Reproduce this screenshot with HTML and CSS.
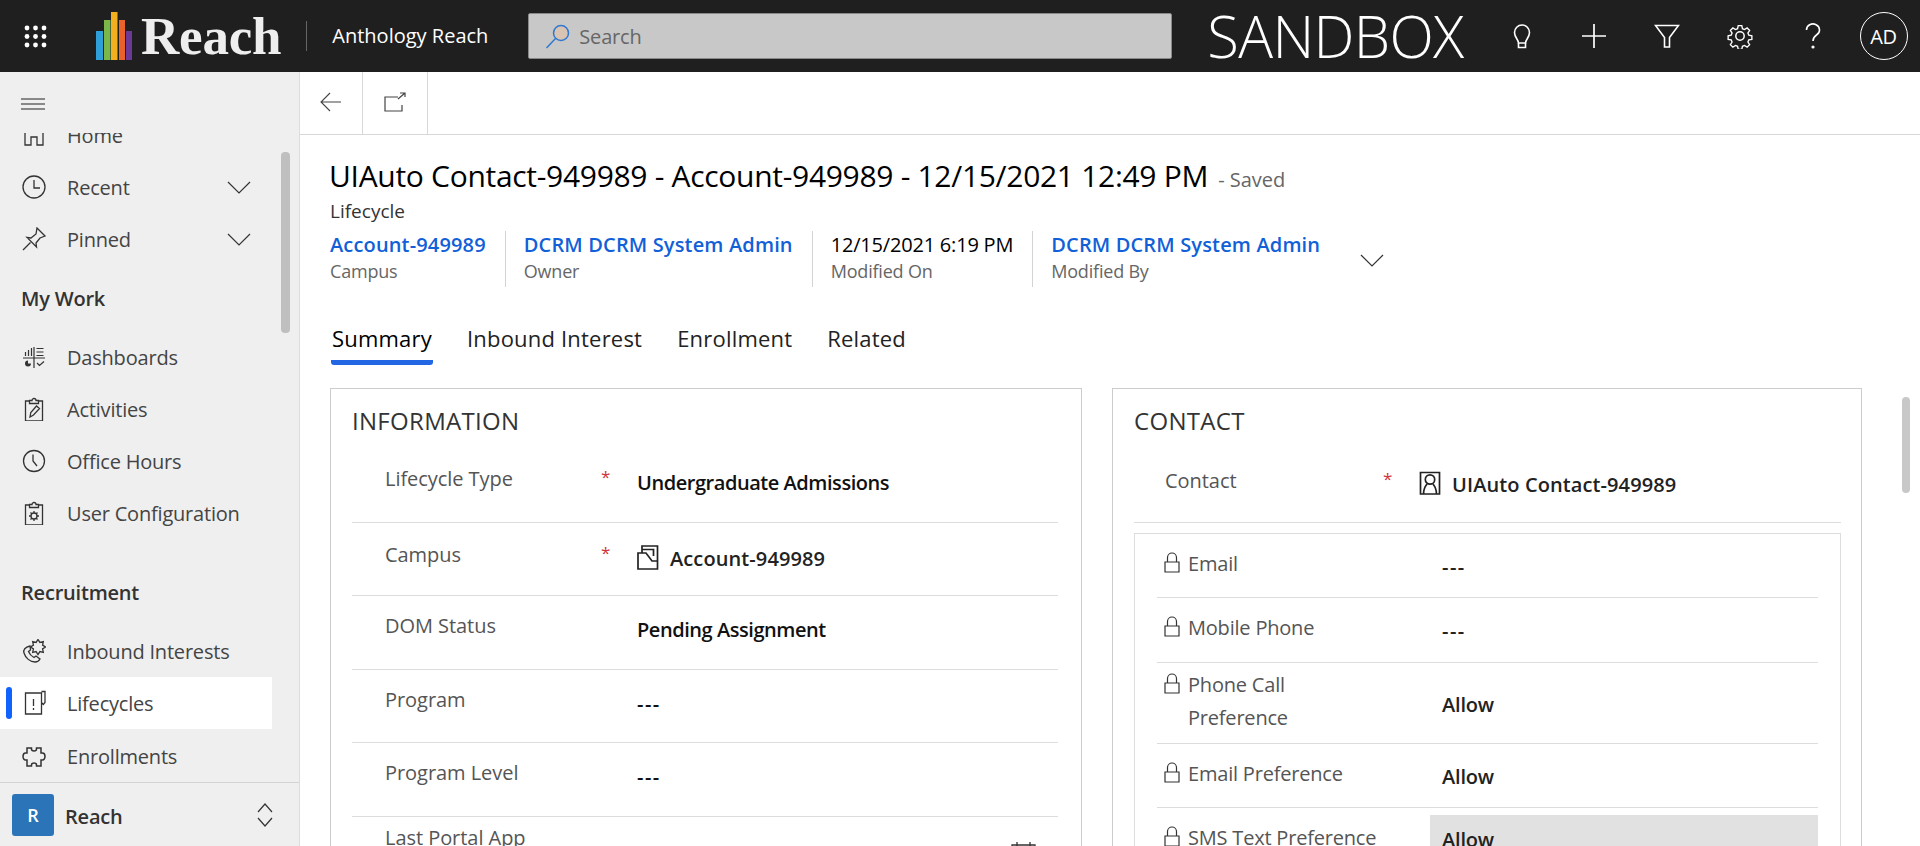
FILE: index.html
```html
<!DOCTYPE html>
<html lang="en">
<head>
    <meta charset="UTF-8">
    <meta name="viewport" content="width=device-width, initial-scale=1.0">
    <title>Anthology Reach - Lifecycle</title>
    <link rel="stylesheet" href="styles.css">
</head>
<body>
    <header class="topbar">
        <svg class="waffle" width="23" height="23" viewBox="0 0 23 23" fill="#fff">
            <circle cx="3" cy="3" r="2.4"/><circle cx="11.5" cy="3" r="2.4"/><circle cx="20" cy="3" r="2.4"/>
            <circle cx="3" cy="11.5" r="2.4"/><circle cx="11.5" cy="11.5" r="2.4"/><circle cx="20" cy="11.5" r="2.4"/>
            <circle cx="3" cy="20" r="2.4"/><circle cx="11.5" cy="20" r="2.4"/><circle cx="20" cy="20" r="2.4"/>
        </svg>
        <svg class="logo-bars" width="36" height="48" viewBox="0 0 36 48">
            <rect x="0" y="19" width="7" height="29" fill="#2e9fd8"/>
            <rect x="8" y="8" width="6.5" height="40" fill="#7ab648"/>
            <rect x="15" y="0" width="6.5" height="48" fill="#f2b01e"/>
            <rect x="23" y="8" width="6" height="40" fill="#e8622a"/>
            <rect x="30" y="19" width="6" height="29" fill="#6b3a96"/>
        </svg>
        <span class="logo-text">Reach</span>
        <span class="app-name">Anthology Reach</span>
        <div class="searchbox">
            <svg width="26" height="26" viewBox="0 0 26 26" fill="none" stroke="#2f78d0" stroke-width="1.5">
                <circle cx="16" cy="10" r="7.5" fill="#d9c4b4"/>
                <path d="M10.5 15.5 1.5 25"/>
            </svg>
            <span>Search</span>
        </div>
        <span class="env-name">SANDBOX</span>
        <div class="top-icons">
            <svg width="24" height="26" viewBox="0 0 24 26" fill="none" stroke="#fff" stroke-width="1.6">
                <path d="M8.5 20c0-3.5-4-5.500-4-10.500a7.500 7.500 0 0 1 15 0c0 5-4 7-4 10.500z"/>
                <path d="M8.500 20v4.500h7V20"/>
            </svg>
            <svg width="26" height="26" viewBox="0 0 26 26" stroke="#fff" stroke-width="1.7">
                <path d="M1 13h24M13 1v24"/>
            </svg>
            <svg width="26" height="26" viewBox="0 0 26 26" fill="none" stroke="#fff" stroke-width="1.6">
                <path d="M1.500 2.500h23l-9 12v9.500h-5v-9.500z"/>
            </svg>
            <svg width="26" height="26" viewBox="0 0 26 26" fill="none" stroke="#fff" stroke-width="1.5">
                <circle cx="13" cy="13" r="4.200"/>
                <path d="M11 1.500h4l.7 3.400 2.300 1 2.900-1.900 2.800 2.800-1.900 2.900 1 2.300 3.400.7v4l-3.400.7-1 2.300 1.900 2.900-2.800 2.800-2.900-1.900-2.300 1-.7 3.400h-4l-.7-3.400-2.300-1-2.900 1.900-2.800-2.800 1.900-2.900-1-2.300-3.400-.7v-4l3.400-.7 1-2.300-1.900-2.900 2.800-2.800 2.900 1.900 2.300-1z" transform="translate(1.300 1.300) scale(.9)"/>
            </svg>
            <svg width="26" height="26" viewBox="0 0 26 26" fill="none" stroke="#fff" stroke-width="1.6">
                <path d="M6.500 7a6.500 6 0 1 1 10 5c-2.500 1.700-3.500 3-3.500 6"/>
                <circle cx="13" cy="24" r=".8" fill="#fff"/>
            </svg>
        </div>
        <div class="avatar">AD</div>
    </header>

    <div class="layout">
        <aside class="sidebar">
            <div class="hamburger">
                <svg width="24" height="12" viewBox="0 0 24 12" stroke="#222" stroke-width="1.200"><path d="M0 1h24M0 6h24M0 11h24"/></svg>
            </div>
            <nav class="nav">
                <div class="nav-scroll">
                    <a class="nav-item">
                        <svg class="nav-icon" width="24" height="24" viewBox="0 0 24 24" fill="none" stroke="#333" stroke-width="1.300"><path d="M3 22V10l9-7 9 7v12h-6v-8H9v8z"/></svg>
                        Home
                    </a>
                    <a class="nav-item">
                        <svg class="nav-icon" width="24" height="24" viewBox="0 0 24 24" fill="none" stroke="#333" stroke-width="1.300"><circle cx="12" cy="12" r="11"/><path d="M12 5v8h6"/></svg>
                        Recent
                        <svg class="nav-chevron" width="24" height="14" viewBox="0 0 24 14" fill="none" stroke="#333" stroke-width="1.200"><path d="M1 1l11 11L23 1"/></svg>
                    </a>
                    <a class="nav-item">
                        <svg class="nav-icon" width="24" height="24" viewBox="0 0 24 24" fill="none" stroke="#333" stroke-width="1.300"><path d="M1 23l7.500-7.500M15 1l8 8-5 2-4 5 .5 4L5 10.500l4 .5 5-4z"/></svg>
                        Pinned
                        <svg class="nav-chevron" width="24" height="14" viewBox="0 0 24 14" fill="none" stroke="#333" stroke-width="1.200"><path d="M1 1l11 11L23 1"/></svg>
                    </a>
                    <div class="nav-heading">My Work</div>
                    <a class="nav-item">
                        <svg class="nav-icon" width="24" height="24" viewBox="0 0 24 24" fill="none" stroke="#333" stroke-width="1.200"><path d="M1 13h22M12 2v21M3.500 7v4M6.500 5v6M9.500 3v8M14.500 3.500h7M14.500 7h7M14.500 10.500h7M15 18l2.500 2.500L22 16.500"/><path d="M6 15.500a3 3 0 1 0 3 3H6z" fill="#333" stroke="none"/></svg>
                        Dashboards
                    </a>
                    <a class="nav-item">
                        <svg class="nav-icon" width="24" height="24" viewBox="0 0 24 24" fill="none" stroke="#333" stroke-width="1.300"><path d="M7.500 4H3.500v20h17V4h-4M7.500 6.500V3.500h2.500a2 2 0 0 1 4 0h2.500v3zM8 20l.8-4.500L14.500 9l3 2.500-6 6.500z"/></svg>
                        Activities
                    </a>
                    <a class="nav-item">
                        <svg class="nav-icon" width="24" height="24" viewBox="0 0 24 24" fill="none" stroke="#333" stroke-width="1.300"><circle cx="12" cy="12" r="10.500"/><path d="M11 5.500V12l4 5"/></svg>
                        Office Hours
                    </a>
                    <a class="nav-item">
                        <svg class="nav-icon" width="24" height="24" viewBox="0 0 24 24" fill="none" stroke="#333" stroke-width="1.300"><path d="M7.500 4H3.500v20h17V4h-4M7.500 6.500V3.500h2.500a2 2 0 0 1 4 0h2.500v3z"/><circle cx="12" cy="15" r="3"/><path d="M12 10v2M12 18v2M7 15h2M15 15h2M8.500 11.500l1.500 1.500M14 17l1.500 1.500M15.500 11.500 14 13M10 17l-1.500 1.500"/></svg>
                        User Configuration
                    </a>
                    <div class="nav-heading nav-heading-gap">Recruitment</div>
                    <a class="nav-item">
                        <svg class="nav-icon" width="24" height="24" viewBox="0 0 24 24" fill="none" stroke="#333" stroke-width="1.300"><path d="M8 7C3 8 1 11 2 14c1.500 5 6 9 11 9 2 0 4-1 5-3l-4-3-2 1.500c-2-1-4.500-3.500-5.500-6L8.500 11z"/><path d="M23.500 8l-2.900 1.900.7 3.400-3.400-.7L16 15.500l-1.900-2.900-3.400.7.7-3.400L8.500 8l2.900-1.900-.7-3.400 3.400.7L16 .5l1.900 2.900 3.400-.7-.7 3.400z"/></svg>
                        Inbound Interests
                    </a>
                    <a class="nav-item nav-item-active">
                        <svg class="nav-icon" width="24" height="26" viewBox="0 0 24 26" fill="none" stroke="#333" stroke-width="1.300"><path d="M19.500 3H3.500v21h16zM19.500 1.500H23v11l-1.700 2-1.800-2"/><path d="M11.500 9v7M11.500 18v2"/></svg>
                        Lifecycles
                    </a>
                    <a class="nav-item nav-item-last">
                        <svg class="nav-icon" width="24" height="24" viewBox="0 0 24 24" fill="none" stroke="#333" stroke-width="1.500"><path d="M5 3h4.500v1a2.500 2 0 0 0 5 0V3H19v5h1.500a2.500 3.500 0 0 1 0 7H19v6h-4.500v-1a2.500 2 0 0 0-5 0v1H5v-6H3.500a2.500 3.500 0 0 1 0-7H5z"/></svg>
                        Enrollments
                    </a>
                </div>
                <div class="nav-thumb"></div>
            </nav>
            <div class="area-switch">
                <span class="area-badge">R</span>
                <span class="area-name">Reach</span>
                <svg width="16" height="24" viewBox="0 0 16 24" fill="none" stroke="#333" stroke-width="1.200"><path d="M1 9l7-8 7 8M1 15l7 8 7-8"/></svg>
            </div>
        </aside>

        <main class="content">
            <div class="cmdbar">
                <button class="cmd-btn">
                    <svg width="22" height="20" viewBox="0 0 22 20" fill="none" stroke="#444" stroke-width="1.100"><path d="M21 10H1M10 1l-9 9 9 9"/></svg>
                </button>
                <button class="cmd-btn cmd-btn-wide">
                    <svg width="22" height="20" viewBox="0 0 22 20" fill="none" stroke="#444" stroke-width="1.200"><path d="M14 5H1v14h17v-6M14 7l7-6M16 1h5v4"/></svg>
                </button>
            </div>

            <div class="record-head">
                <div class="title-row">
                    <h1>UIAuto Contact-949989 - Account-949989 - 12/15/2021 12:49 PM</h1>
                    <span class="saved">- Saved</span>
                </div>
                <div class="entity">Lifecycle</div>
                <div class="meta">
                    <div class="meta-col">
                        <a class="meta-link">Account-949989</a>
                        <span class="meta-sub">Campus</span>
                    </div>
                    <div class="meta-col">
                        <a class="meta-link">DCRM DCRM System Admin</a>
                        <span class="meta-sub">Owner</span>
                    </div>
                    <div class="meta-col">
                        <span class="meta-val">12/15/2021 6:19 PM</span>
                        <span class="meta-sub">Modified On</span>
                    </div>
                    <div class="meta-col">
                        <a class="meta-link">DCRM DCRM System Admin</a>
                        <span class="meta-sub">Modified By</span>
                    </div>
                    <svg class="meta-chevron" width="24" height="14" viewBox="0 0 24 14" fill="none" stroke="#333" stroke-width="1.200"><path d="M1 1l11 11L23 1"/></svg>
                </div>
                <div class="tabs">
                    <a class="tab tab-active">Summary</a>
                    <a class="tab">Inbound Interest</a>
                    <a class="tab">Enrollment</a>
                    <a class="tab">Related</a>
                </div>
            </div>

            <div class="cards">
                <section class="card">
                    <h2>INFORMATION</h2>
                    <div class="field">
                        <label>Lifecycle Type</label><span class="req">*</span>
                        <span class="value">Undergraduate Admissions</span>
                    </div>
                    <div class="field">
                        <label class="low">Campus</label><span class="req low">*</span>
                        <span class="value value-link low">
                            <svg class="lookup-icon" width="22" height="25" viewBox="0 0 22 25" fill="none" stroke="#222" stroke-width="1.700"><path d="M1 8h8l6 8h5.500v8H1zM5 8V1h15.500v15M5 4.500h11.500V11"/></svg>
                            Account-949989
                        </span>
                    </div>
                    <div class="field">
                        <label>DOM Status</label><span></span>
                        <span class="value">Pending Assignment</span>
                    </div>
                    <div class="field">
                        <label>Program</label><span></span>
                        <span class="value dashes">---</span>
                    </div>
                    <div class="field">
                        <label>Program Level</label><span></span>
                        <span class="value dashes">---</span>
                    </div>
                    <div class="field">
                        <label class="top">Last Portal App</label><span></span>
                        <span class="value value-date">
                            <svg width="25" height="25" viewBox="0 0 25 25" fill="none" stroke="#333" stroke-width="1.300"><path d="M1 4h23v20H1zM1 9h23M6 1v5M19 1v5"/></svg>
                        </span>
                    </div>
                </section>

                <section class="card">
                    <h2>CONTACT</h2>
                    <div class="field field-contact">
                        <label>Contact</label><span class="req">*</span>
                        <span class="value value-link">
                            <svg class="lookup-icon" width="22" height="24" viewBox="0 0 22 24" fill="none" stroke="#222" stroke-width="1.700"><path d="M1.500 23V1.500h19V23z"/><circle cx="11" cy="8.500" r="4.700"/><path d="M4.500 23c0-4.500 1.500-7.500 3.500-10M17.500 23c0-4.500-1.500-7.500-3.500-10"/></svg>
                            UIAuto Contact-949989
                        </span>
                    </div>
                    <div class="subgrid">
                        <div class="sub-row">
                            <div class="sub-label">
                                <svg class="lock" width="16" height="21" viewBox="0 0 16 21" fill="none" stroke="#333" stroke-width="1.200"><path d="M1 10h14v10H1zM3.500 10V5.500a4.500 4.500 0 0 1 9 0V10"/></svg>
                                <span>Email</span>
                            </div>
                            <div class="sub-value dashes">---</div>
                        </div>
                        <div class="sub-row">
                            <div class="sub-label">
                                <svg class="lock" width="16" height="21" viewBox="0 0 16 21" fill="none" stroke="#333" stroke-width="1.200"><path d="M1 10h14v10H1zM3.500 10V5.500a4.500 4.500 0 0 1 9 0V10"/></svg>
                                <span>Mobile Phone</span>
                            </div>
                            <div class="sub-value dashes">---</div>
                        </div>
                        <div class="sub-row sub-row-tall">
                            <div class="sub-label">
                                <svg class="lock" width="16" height="21" viewBox="0 0 16 21" fill="none" stroke="#333" stroke-width="1.200"><path d="M1 10h14v10H1zM3.500 10V5.500a4.500 4.500 0 0 1 9 0V10"/></svg>
                                <span>Phone Call<br>Preference</span>
                            </div>
                            <div class="sub-value">Allow</div>
                        </div>
                        <div class="sub-row">
                            <div class="sub-label">
                                <svg class="lock" width="16" height="21" viewBox="0 0 16 21" fill="none" stroke="#333" stroke-width="1.200"><path d="M1 10h14v10H1zM3.500 10V5.500a4.500 4.500 0 0 1 9 0V10"/></svg>
                                <span>Email Preference</span>
                            </div>
                            <div class="sub-value">Allow</div>
                        </div>
                        <div class="sub-row">
                            <div class="sub-label">
                                <svg class="lock" width="16" height="21" viewBox="0 0 16 21" fill="none" stroke="#333" stroke-width="1.200"><path d="M1 10h14v10H1zM3.500 10V5.500a4.500 4.500 0 0 1 9 0V10"/></svg>
                                <span>SMS Text Preference</span>
                            </div>
                            <div class="sub-value sub-value-hover">Allow</div>
                        </div>
                    </div>
                </section>
            </div>
            <div class="page-thumb"></div>
        </main>
    </div>
</body>
</html>
```

FILE: styles.css
```css
* {
    box-sizing: border-box;
}

html, body {
    margin: 0;
    height: 846px;
    overflow: hidden;
}

body {
    font-family: "Open Sans", "Noto Sans", sans-serif;
    font-size: 20px;
    letter-spacing: -0.2px;
    color: #000;
    background-color: #fff;
}

/* top bar */
.topbar {
    height: 72px;
    background-color: #1f1f1f;
    color: #fff;
    display: flex;
    align-items: center;
    padding-left: 24px;
}

.logo-bars {
    margin-left: 49px;
}

.logo-text {
    font-family: "Liberation Serif", serif;
    font-weight: 700;
    font-size: 53px;
    letter-spacing: -0.2px;
    color: #eee;
    margin-left: 9px;
    line-height: 72px;
}

.app-name {
    margin-left: 25px;
    padding-left: 25px;
    border-left: 1px solid #666;
    line-height: 30px;
    letter-spacing: 0;
}

.searchbox {
    margin-left: 40px;
    width: 644px;
    height: 46px;
    background-color: #c8c8c8;
    border: 1px solid #888;
    border-radius: 2px;
    display: flex;
    align-items: center;
    gap: 8px;
    padding-left: 16px;
    color: #666;
}

.env-name {
    font-weight: 300;
    font-size: 58px;
    letter-spacing: -0.7px;
    margin-left: 35px;
    line-height: 72px;
}

.top-icons {
    display: flex;
    align-items: center;
    gap: 47px;
    margin-left: 46px;
}

.avatar {
    width: 48px;
    height: 48px;
    margin-left: 34px;
    border: 1px solid #fff;
    border-radius: 50%;
    display: flex;
    align-items: center;
    justify-content: center;
    font-size: 20px;
}

.layout {
    display: flex;
    height: 774px;
}

/* left nav */
.sidebar {
    width: 300px;
    flex-shrink: 0;
    background-color: #efefef;
    display: flex;
    flex-direction: column;
    border-right: 1px solid #ddd;
    color: #444;
}

.hamburger {
    height: 61px;
    flex-shrink: 0;
    padding: 26px 0 0 21px;
}

.hamburger svg {
    display: block;
}

.nav {
    position: relative;
    flex: 1;
    overflow: hidden;
}

.nav-scroll {
    margin-top: -24px;
}

.nav-item {
    height: 52px;
    width: 272px;
    display: flex;
    align-items: center;
    padding-left: 22px;
    position: relative;
}

.nav-icon {
    flex-shrink: 0;
    margin-right: 21px;
}

.nav-chevron {
    position: absolute;
    left: 227px;
    top: 20px;
}

.nav-item-active {
    background-color: #fff;
}

.nav-item-active::before {
    content: "";
    position: absolute;
    left: 6px;
    top: 10px;
    width: 6px;
    height: 32px;
    border-radius: 3px;
    background-color: #0f62fe;
}

.nav-item-last {
    padding-top: 3px;
}

.nav-heading {
    height: 66px;
    padding-left: 21px;
    display: flex;
    align-items: center;
    font-weight: 600;
    color: #333;
}

.nav-heading-gap {
    margin-top: 20px;
}

.nav-thumb {
    position: absolute;
    left: 281px;
    top: 19px;
    width: 9px;
    height: 181px;
    border-radius: 4px;
    background-color: #bfbfbf;
}

.area-switch {
    height: 64px;
    flex-shrink: 0;
    border-top: 1px solid #d4d4d4;
    display: flex;
    align-items: center;
    padding-left: 12px;
    font-weight: 600;
    color: #333;
}

.area-badge {
    width: 42px;
    height: 42px;
    border-radius: 3px;
    background-color: #2b74b8;
    color: #fff;
    font-size: 18px;
    display: flex;
    align-items: center;
    justify-content: center;
}

.area-name {
    margin-left: 11px;
    width: 192px;
    padding-top: 3px;
}

/* record */
.content {
    position: relative;
    flex: 1;
    overflow: hidden;
}

.cmdbar {
    height: 63px;
    border-bottom: 1px solid #d8d8d8;
    display: flex;
}

.cmd-btn {
    width: 63px;
    background: none;
    border: none;
    border-right: 1px solid #d8d8d8;
    padding: 0;
}

.cmd-btn-wide {
    width: 65px;
}

.record-head {
    padding: 21px 0 0 30px;
}

.title-row {
    display: flex;
    align-items: baseline;
    gap: 10px;
}

h1 {
    margin: 0 0 0 -1px;
    font-size: 30px;
    font-weight: 500;
    line-height: 40px;
    letter-spacing: -0.3px;
}

.saved {
    color: #666;
    letter-spacing: 0;
}

.entity {
    font-size: 19px;
    font-weight: 500;
    line-height: 24px;
    margin-top: 3px;
    letter-spacing: 0;
    color: #333;
}

.meta {
    display: flex;
    align-items: flex-start;
    margin-top: 8px;
    height: 56px;
}

.meta-col {
    display: flex;
    flex-direction: column;
    height: 56px;
    padding: 1px 19px 0 18px;
    border-right: 1px solid #d4d4d4;
}

.meta-col:first-child {
    padding-left: 0;
}

.meta-col:nth-child(4) {
    border-right: none;
}

.meta-link {
    color: #1160d8;
    font-weight: 600;
    line-height: 26px;
    letter-spacing: 0.15px;
}

.meta-val {
    line-height: 26px;
    letter-spacing: -0.2px;
}

.meta-sub {
    font-size: 18px;
    color: #666;
    line-height: 26px;
}

.meta-chevron {
    margin: 23px 0 0 21px;
}

.tabs {
    display: flex;
    gap: 33px;
    height: 50px;
    margin: 28px 0 0 1px;
}

.tab {
    font-size: 22px;
    line-height: 46px;
    height: 50px;
    padding: 0 1px;
    letter-spacing: 0.2px;
    color: #222;
}

.tab-active {
    font-weight: 500;
    border-bottom: 5px solid #2266e3;
    border-radius: 0 0 3px 3px;
    color: #000;
}

.cards {
    display: grid;
    grid-template-columns: 752px 750px;
    gap: 30px;
    margin: 23px 0 0 30px;
}

.card {
    border: 1px solid #ccc;
    padding: 0 23px 0 21px;
    height: 560px;
}

.card:last-child {
    padding-right: 20px;
}

h2 {
    margin: 0;
    font-size: 24px;
    font-weight: 400;
    line-height: 63px;
    height: 60px;
    letter-spacing: 0.3px;
    color: #333;
}

.field {
    display: grid;
    grid-template-columns: 219px 33px 1fr;
    height: 73.5px;
    padding-left: 33px;
    border-bottom: 1px solid #ddd;
}

.field-contact {
    grid-template-columns: 221px 33px 1fr;
    padding-left: 31px;
}

.field label {
    color: #555;
    line-height: 24px;
    padding-top: 18px;
    letter-spacing: -0.05px;
}

.field label.low {
    padding-top: 20px;
}

.field label.top {
    padding-top: 9px;
}

.req {
    color: #d13438;
    font-size: 17px;
    line-height: 24px;
    padding-top: 16px;
    margin-left: -3px;
}

.req.low {
    padding-top: 18px;
}

.value {
    font-weight: 600;
    line-height: 24px;
    padding-top: 22px;
    letter-spacing: -0.45px;
    color: #111;
}

.value.low {
    padding-top: 24px;
}

.value-link {
    display: flex;
    align-items: flex-start;
    gap: 11px;
    letter-spacing: 0.1px;
    color: #222;
}

.lookup-icon {
    margin-top: -2px;
    flex-shrink: 0;
}

.value-date {
    display: flex;
    justify-content: flex-end;
    padding: 24px 22px 0 0;
}

.dashes {
    letter-spacing: 1.5px;
}

.field-contact label {
    padding-top: 20px;
}

.field-contact .req {
    padding-top: 18px;
}

.field-contact .value {
    padding-top: 24px;
}

.subgrid {
    margin-top: 10px;
    border: 1px solid #ddd;
    padding: 0 22px;
    height: 400px;
}

.sub-row {
    display: grid;
    grid-template-columns: 273px 1fr;
    height: 64.5px;
    border-bottom: 1px solid #ddd;
}

.sub-row-tall {
    height: 81px;
}

.sub-label {
    display: flex;
    align-items: flex-start;
    gap: 8px;
    padding: 13px 0 0 7px;
    line-height: 33px;
    color: #555;
}

.sub-row-tall .sub-label {
    padding-top: 5px;
}

.lock {
    flex-shrink: 0;
    margin-top: 5px;
}

.sub-value {
    font-weight: 600;
    padding: 21px 0 0 12px;
    line-height: 24px;
    color: #222;
}

.sub-row-tall .sub-value {
    padding-top: 30px;
}

.sub-value-hover {
    background-color: #e1e1e1;
    margin-top: 7px;
    padding-top: 13px;
}

.page-thumb {
    position: absolute;
    left: 1602px;
    top: 325px;
    width: 8px;
    height: 96px;
    border-radius: 4px;
    background-color: #c8c8c8;
}
```
